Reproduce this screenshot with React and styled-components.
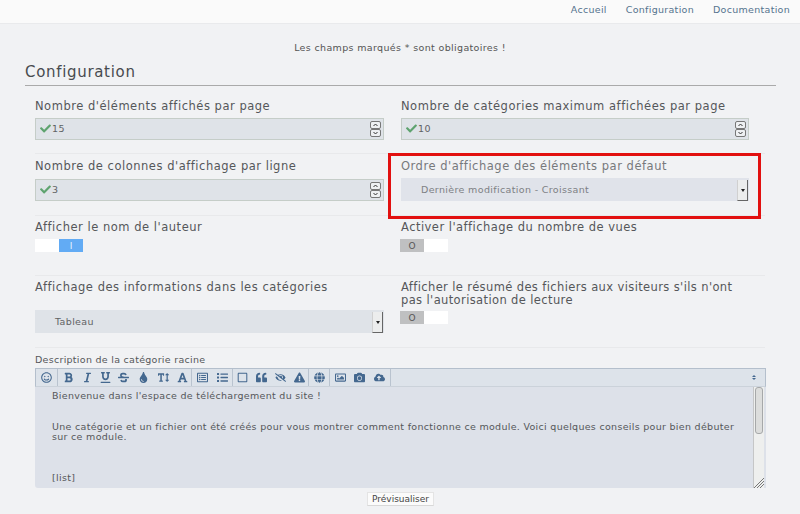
import React from 'react';
import styled, { createGlobalStyle } from 'styled-components';
import {
  FaRegSmile, FaBold, FaItalic, FaUnderline, FaStrikethrough, FaTint, FaTextHeight, FaFont,
  FaRegListAlt, FaList, FaRegSquare, FaQuoteLeft, FaEyeSlash, FaExclamationTriangle,
  FaGlobe, FaRegImage, FaCamera, FaCloudUploadAlt, FaCheck,
} from 'react-icons/fa';

const Global = createGlobalStyle`
  html, body { margin: 0; padding: 0; background: #f1f2f4; }
  body { width: 800px; height: 514px; overflow: hidden; font-family: "DejaVu Sans", sans-serif; color: #555; }
  * { box-sizing: border-box; }
`;

const Page = styled.div`position: relative; width: 800px; height: 514px; overflow: hidden;`;
const Header = styled.header`
  height: 24px; background: #fafafa; border-bottom: 1px solid #e9eaec;
  display: flex; justify-content: flex-end; align-items: center; gap: 19px; padding: 0 10px 4px 0;
`;
const NavLink = styled.a`font-size: 9.5px; letter-spacing: 0.29px; color: #55738e;`;
const Notice = styled.p`margin: 18px 0 0; height: 11px; line-height: 11px; text-align: center; font-size: 9.5px; letter-spacing: 0.35px; color: #555;`;
const Title = styled.h2`
  margin: 9px 24px 0 25px; height: 24px; padding-top: 1px; font-weight: 400; font-size: 15px; letter-spacing: 0.68px; line-height: 18px;
  color: #484b4f; border-bottom: 1px solid #aaa;
`;
const Form = styled.div`margin: 0 35px;`;
const Row = styled.div`
  display: grid; grid-template-columns: 366px 1fr; height: ${p => p.$h}px; padding-top: ${p => p.$pt}px;
  border-bottom: 1px solid #e8e9eb;
`;
const Cell = styled.div`display: flex; flex-direction: column; min-width: 0;`;
const Label = styled.label`
  font-size: 11.5px; letter-spacing: ${p => p.$ls ?? 0.52}px; line-height: 12.5px; color: ${p => (p.$dim ? '#77797c' : '#55575a')};
  margin-bottom: ${p => p.$mb}px; max-width: 345px;
`;
const NumberField = styled.div`
  width: ${p => p.$w}px; height: 22px; background: #dfe3e8; border: 1px solid #c5cdc8;
  display: flex; align-items: center; padding: 0 1px 1px 3px;
  font-size: 9.5px; letter-spacing: 0.35px; color: #5f6264;
  svg.check { color: #5ea36f; width: 13px; height: 11px; margin-right: 0; }
`;
const Value = styled.span`flex: 1;`;
const Spinner = styled.div`display: flex; flex-direction: column; width: 11px; margin-right: 1px; margin-top: 1px;`;
const SpinBtn = styled.svg`display: block; width: 11px; height: 8px; background: #eef0f2; border: 1px solid #777; border-radius: 2px;`;
const Select = styled.div`
  width: ${p => p.$w}px; height: 23px; background: ${p => (p.$dim ? '#e0e3ea' : '#dfe3e8')}; display: flex; align-items: center;
  justify-content: space-between; padding: 0 1px 1px 20px; font-size: 9.5px; letter-spacing: 0.35px;
  color: ${p => (p.$dim ? '#7d8084' : '#5f6264')};
`;
const Arrow = styled.div`
  width: 11px; height: 21px; margin-bottom: -1px; align-self: flex-end; background: #eceded;
  border-right: 1px solid #666; border-bottom: 1px solid #666;
  border-left: 1px solid #d0d0d0; display: flex; align-items: center; justify-content: center;
  &::after { content: ""; border: 2px solid transparent; border-top: 3px solid #222; margin-top: 3px; }
`;
const Toggle = styled.div`
  display: flex; width: 48px; height: 13px; background: #fff; margin-left: ${p => (p.$on ? 0 : -1)}px;
  ${p => (p.$on ? 'justify-content: flex-end;' : '')}
`;
const Knob = styled.div`
  width: 24px; height: 13px; display: flex; align-items: center; justify-content: center;
  font-size: 9px; background: ${p => (p.$on ? '#62abf4' : '#bfc0c1')}; color: ${p => (p.$on ? '#e8f2fc' : '#555')};
`;
const EditorLabel = styled.div`font-size: 9.5px; letter-spacing: 0.28px; line-height: 11px; color: #55575a; margin-top: 6px;`;
const Editor = styled.div`
  position: relative; margin: 3px 0 0; width: 731px; height: 120px; background: #dde1e9; border-radius: 0 0 0 3px;
  overflow: hidden;
`;
const Toolbar = styled.div`
  height: 19px; display: flex; align-items: stretch; background: #dde3ea; border: 1px solid #b4bfcc; border-bottom: 1px solid #cbd2da;
`;
const Group = styled.div`display: flex; align-items: center; border-right: 1px solid #b9c3cf; color: #44688f;
  svg { width: 11px; height: 11px; display: block; flex: none; }
`;
const IconSlot = styled.span`width: ${p => p.$w}px; display: flex; justify-content: center;`;
const Sort = styled.span`
  margin-left: auto; width: 22px; display: flex; flex-direction: column; align-items: center; justify-content: center; color: #44688f;
  &::before { content: ""; border: 2px solid transparent; border-bottom: 2px solid currentColor; }
  &::after { content: ""; border: 2px solid transparent; border-top: 2px solid currentColor; margin-top: 1px; }
`;
const Content = styled.div`
  padding: 4px 22px 0 17px; font-size: 9.5px; letter-spacing: 0.3px; line-height: 10.3px; color: #55575a; white-space: pre-wrap;
`;
const Scroll = styled.div`
  position: absolute; right: 2px; top: 19px; bottom: 0; width: 11px; background: #eeefee;
  border-left: 1px solid #c5c6c7;
`;
const Thumb = styled.div`margin: 0 0 0 1px; width: 8px; height: 47px; background: #dcdddc; border: 1px solid #a6a8a9; border-radius: 3px;`;
const Grip = styled.svg`position: absolute; right: 0; bottom: 0; width: 11px; height: 11px;`;
const Actions = styled.div`display: flex; justify-content: center; margin-top: 4px;`;
const Button = styled.button`
  width: 67px; height: 14px; padding: 0; background: #fbfbfb; border: 1px solid #e4e4e4; border-bottom-color: #d8d8d8;
  font: 9px "DejaVu Sans", sans-serif; color: #444; margin-left: 1px;
`;
const Highlight = styled.div`
  position: absolute; left: 388px; top: 153px; width: 373px; height: 66px; border: 3px solid #e2100f; pointer-events: none;
`;

function NumField({ v, w }) {
  return (
    <NumberField $w={w}>
      <FaCheck className="check" />
      <Value>{v}</Value>
      <Spinner>
        <SpinBtn viewBox="0 0 9 6"><path d="M2.5 4L4.5 2L6.5 4" fill="none" stroke="#333" /></SpinBtn>
        <SpinBtn viewBox="0 0 9 6"><path d="M2.5 2L4.5 4L6.5 2" fill="none" stroke="#333" /></SpinBtn>
      </Spinner>
    </NumberField>
  );
}

const groups = [
  [[FaRegSmile, 21]],
  [[FaBold, 20], [FaItalic, 18], [FaUnderline, 18], [FaStrikethrough, 19], [FaTint, 20], [FaTextHeight, 20], [FaFont, 18]],
  [[FaRegListAlt, 20], [FaList, 20]],
  [[FaRegSquare, 19], [FaQuoteLeft, 19], [FaEyeSlash, 19], [FaExclamationTriangle, 18]],
  [[FaGlobe, 20]],
  [[FaRegImage, 20], [FaCamera, 19], [FaCloudUploadAlt, 21]],
];

const text = `Bienvenue dans l'espace de téléchargement du site !


Une catégorie et un fichier ont été créés pour vous montrer comment fonctionne ce module. Voici quelques conseils pour bien débuter sur ce module.



[list]`;

export default function App() {
  return (
    <Page>
      <Global />
      <Header>
        <NavLink>Accueil</NavLink>
        <NavLink>Configuration</NavLink>
        <NavLink>Documentation</NavLink>
      </Header>
      <Notice>Les champs marqués * sont obligatoires !</Notice>
      <Title>Configuration</Title>
      <Form>
        <Row $h={68} $pt={14}>
          <Cell><Label $mb={5.5}>Nombre d'éléments affichés par page</Label><NumField v="15" w={349} /></Cell>
          <Cell><Label $mb={5.5}>Nombre de catégories maximum affichées par page</Label><NumField v="10" w={348} /></Cell>
        </Row>
        <Row $h={62} $pt={6}>
          <Cell><Label $mb={6.5}>Nombre de colonnes d'affichage par ligne</Label><NumField v="3" w={349} /></Cell>
          <Cell><Label $dim $mb={5.5}>Ordre d'affichage des éléments par défaut</Label><Select $dim $w={348}>Dernière modification - Croissant<Arrow /></Select></Cell>
        </Row>
        <Row $h={60} $pt={5}>
          <Cell><Label $mb={5.5}>Afficher le nom de l'auteur</Label><Toggle $on><Knob $on>I</Knob></Toggle></Cell>
          <Cell><Label $ls={0.47} $mb={5.5}>Activer l'affichage du nombre de vues</Label><Toggle><Knob>O</Knob></Toggle></Cell>
        </Row>
        <Row $h={72} $pt={5}>
          <Cell><Label $mb={16.5}>Affichage des informations dans les catégories</Label><Select $w={349}>Tableau<Arrow /></Select></Cell>
          <Cell><Label $ls={0.38} $mb={5}>Afficher le résumé des fichiers aux visiteurs s'ils n'ont pas l'autorisation de lecture</Label><Toggle><Knob>O</Knob></Toggle></Cell>
        </Row>
        <EditorLabel>Description de la catégorie racine</EditorLabel>
        <Editor>
          <Toolbar>
            {groups.map((g, i) => (
              <Group key={i}>
                {g.map(([Icon, w], j) => <IconSlot key={j} $w={w}><Icon /></IconSlot>)}
              </Group>
            ))}
            <Sort />
          </Toolbar>
          <Content>{text}</Content>
          <Scroll>
            <Thumb />
            <Grip viewBox="0 0 11 11">
              <path d="M1 11L11 1M4 11L11 4M7 11L11 7" stroke="#777" fill="none" />
            </Grip>
          </Scroll>
        </Editor>
        <Actions><Button>Prévisualiser</Button></Actions>
      </Form>
      <Highlight />
    </Page>
  );
}
